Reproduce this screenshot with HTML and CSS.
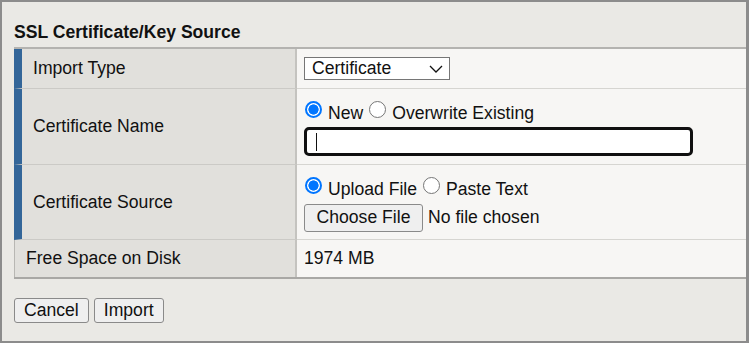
FILE: index.html
```html
<!DOCTYPE html>
<html lang="en">
<head>
    <meta charset="UTF-8">
    <title>SSL Certificate/Key Source</title>
    <link rel="stylesheet" href="styles.css">
</head>
<body>

    <div class="panel">
        <h2 class="panel-title">SSL Certificate/Key Source</h2>

        <table class="props">
            <colgroup>
                <col class="col-label">
                <col>
            </colgroup>
            <tr class="row-1">
                <td class="label required">Import Type</td>
                <td class="value">
                    <div class="select">
                        <span>Certificate</span>
                        <svg class="chevron" width="14" height="8" viewBox="0 0 14 8"><path d="M1 1 L7 7 L13 1" fill="none" stroke="#111" stroke-width="1.3"/></svg>
                    </div>
                </td>
            </tr>
            <tr class="row-2">
                <td class="label required">Certificate Name</td>
                <td class="value">
                    <div class="radio-line">
                        <span class="radio checked"></span><span class="radio-text">New</span>
                        <span class="radio"></span><span class="radio-text">Overwrite Existing</span>
                    </div>
                    <div class="text-field"><span class="caret"></span></div>
                </td>
            </tr>
            <tr class="row-3">
                <td class="label required">Certificate Source</td>
                <td class="value">
                    <div class="radio-line">
                        <span class="radio checked"></span><span class="radio-text">Upload File</span>
                        <span class="radio"></span><span class="radio-text">Paste Text</span>
                    </div>
                    <div class="file-line">
                        <button class="btn file-btn">Choose File</button>
                        <span class="file-name">No file chosen</span>
                    </div>
                </td>
            </tr>
            <tr class="row-4">
                <td class="label">Free Space on Disk</td>
                <td class="value">1974 MB</td>
            </tr>
        </table>

        <div class="actions">
            <button class="btn">Cancel</button>
            <button class="btn">Import</button>
        </div>
    </div>

</body>
</html>
```

FILE: styles.css
```css
body {
    margin: 0;
    font-family: "Liberation Sans", Arial, sans-serif;
    font-size: 17.6px;
    color: #111;
}

.panel {
    box-sizing: border-box;
    height: 343px;
    border: 2px solid #8c8c8c;
    border-right-width: 3px;
    background: #eae9e5;
    padding: 20px 0 0 12px;
}

.panel-title {
    margin: 0 0 5px 0;
    font-size: 17.6px;
    line-height: 20px;
    font-weight: bold;
}

/* properties table */
.props {
    width: 100%;
    table-layout: fixed;
    border-collapse: separate;
    border-spacing: 0;
    border-top: 2px solid #b4b3b0;
    border-bottom: 2px solid #a9a8a5;
}

.col-label {
    width: 283px;
}

.props td {
    padding: 0;
    vertical-align: middle;
    border-bottom: 1px solid #d6d5d1;
}

.props tr:last-child td {
    border-bottom: none;
}

.label {
    background: #e1e0dc;
    padding-left: 11px !important;
    border-left: 1px solid #b8b7b3;
    border-right: 2px solid #c4c3bf;
    border-bottom-color: #cbcac6 !important;
}

.label.required {
    border-left: 8px solid #336699;
}

.value {
    background: #f7f6f4;
    padding-left: 7px !important;
}

.row-1 td { height: 39px; }
.row-2 td { height: 75px; }
.row-3 td { height: 74px; }
.row-4 td { height: 37px; }

.select {
    box-sizing: border-box;
    width: 146px;
    height: 23px;
    border: 1px solid #767676;
    background: #fff;
    display: flex;
    align-items: center;
    justify-content: space-between;
    padding: 0 6px 0 7px;
}

.chevron {
    margin-top: 1px;
}

.radio-line {
    display: flex;
    align-items: flex-end;
    height: 26px;
    line-height: 20px;
}

.radio {
    box-sizing: border-box;
    width: 17px;
    height: 17px;
    border-radius: 50%;
    border: 1px solid #767676;
    background: #fff;
    margin: 0 6px 0 1px;
    position: relative;
    top: -5px;
}

.radio-text + .radio {
    margin-left: 6px;
}

.radio.checked {
    border: 2px solid #0075ff;
    background: radial-gradient(circle, #0075ff 0 4.8px, #fff 5.4px);
}

.text-field {
    box-sizing: border-box;
    width: 389px;
    height: 29px;
    margin-top: 4px;
    border: 3px solid #101010;
    border-radius: 5px;
    background: #fff;
    display: flex;
    align-items: center;
    padding-left: 9px;
}

.caret {
    width: 1px;
    height: 18px;
    background: #111;
}

.file-line {
    display: flex;
    align-items: center;
    margin-top: 5px;
}

.btn {
    font-family: inherit;
    font-size: 17.6px;
    color: #111;
    background: #efefef;
    border: 1px solid #8a8a8a;
    border-radius: 3px;
    height: 25px;
    padding: 0 9px;
    line-height: 1;
}

.file-btn {
    height: 28px;
    width: 119px;
    padding: 0;
}

.file-name {
    margin-left: 5px;
}

.actions {
    display: flex;
    gap: 5px;
    margin-top: 19px;
}
```
